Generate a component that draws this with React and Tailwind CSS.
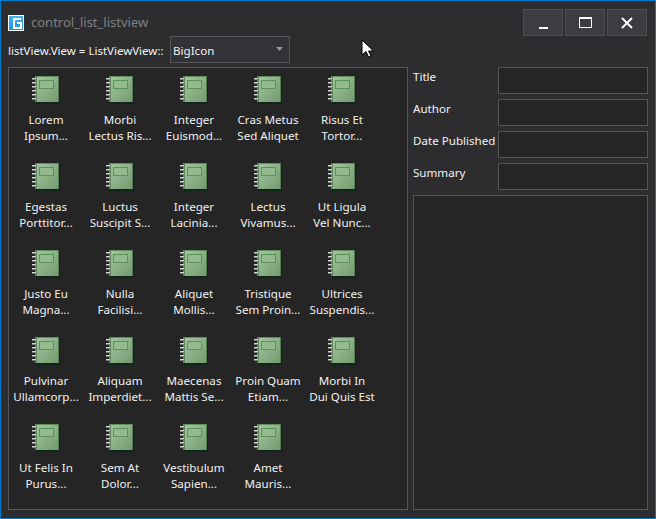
const rows = [
  [["Lorem", "Ipsum..."], ["Morbi", "Lectus Ris..."], ["Integer", "Euismod..."], ["Cras Metus", "Sed Aliquet"], ["Risus Et", "Tortor..."]],
  [["Egestas", "Porttitor..."], ["Luctus", "Suscipit S..."], ["Integer", "Lacinia..."], ["Lectus", "Vivamus..."], ["Ut Ligula", "Vel Nunc..."]],
  [["Justo Eu", "Magna..."], ["Nulla", "Facilisi..."], ["Aliquet", "Mollis..."], ["Tristique", "Sem Proin..."], ["Ultrices", "Suspendis..."]],
  [["Pulvinar", "Ullamcorp..."], ["Aliquam", "Imperdiet..."], ["Maecenas", "Mattis Se..."], ["Proin Quam", "Etiam..."], ["Morbi In", "Dui Quis Est"]],
  [["Ut Felis In", "Purus..."], ["Sem At", "Dolor..."], ["Vestibulum", "Sapien..."], ["Amet", "Mauris..."]],
];

function Notebook() {
  const spiral = [3, 7, 11, 15, 19, 23];
  return (
    <svg width="28" height="28" viewBox="0 0 28 28" className="block">
      <defs>
        <linearGradient id="nb" x1="0" y1="0" x2="1" y2="1">
          <stop offset="0" stopColor="#a4c8a0" />
          <stop offset="1" stopColor="#74996f" />
        </linearGradient>
      </defs>
      <rect x="4" y="1" width="24" height="27" fill="#10261a" />
      <rect x="3" y="0" width="24" height="26" fill="url(#nb)" />
      <rect x="3" y="0" width="24" height="1" fill="#5f8f5e" />
      <rect x="26" y="0" width="1" height="26" fill="#4f7f50" />
      <rect x="3" y="0" width="2" height="26" fill="#5f865c" />
      <rect x="7.5" y="4.5" width="14" height="8" fill="#94bb8f" stroke="#5c915a" />
      {spiral.map((y) => (
        <g key={y}>
          <rect x="0" y={y - 1} width="4" height="1" fill="#d6d6d6" />
          <rect x="0" y={y} width="4" height="1" fill="#77807a" />
        </g>
      ))}
    </svg>
  );
}

function Item({ lines }) {
  return (
    <div className="flex h-[87px] w-[74px] flex-col items-center pt-[8px]">
      <Notebook />
      <div className="mt-[8px] text-center text-[11.6px] leading-[16px] whitespace-nowrap text-[#f1f1f1]">
        <div>{lines[0]}</div>
        <div>{lines[1]}</div>
      </div>
    </div>
  );
}

function Field({ label }) {
  return (
    <div className="flex h-[27px] items-start">
      <div className="w-[85px] pt-[2px] text-[11.6px] leading-[16px] whitespace-nowrap text-[#f1f1f1]">{label}</div>
      <div className="h-[27px] w-[150px] border border-[#55555a] bg-[#252526]" />
    </div>
  );
}

function WinButton({ children }) {
  return (
    <div className="flex h-[27px] w-[40px] items-center justify-center border border-[#4d4d52] bg-[#3c3c42]">
      {children}
    </div>
  );
}

export default function App() {
  return (
    <div
      className="relative flex h-[519px] w-[656px] flex-col overflow-hidden border border-[#007acc] bg-[#2d2d30]"
      style={{ fontFamily: '"Noto Sans", sans-serif' }}
    >
      <div className="flex h-[35px] items-start">
        <div className="mt-[14px] ml-[7px] flex h-[16px] w-[16px] items-center justify-center border border-white bg-gradient-to-b from-[#3db4f5] to-[#2a8fd8]">
          <svg width="12" height="12" viewBox="0 0 12 12">
            <path d="M11 2H4v9h7V6H7" fill="none" stroke="#fff" strokeWidth="2" />
          </svg>
        </div>
        <div className="mt-[12px] ml-[7px] text-[13px] leading-[19px] text-[#808080]">control_list_listview</div>
        <div className="mt-[8px] mr-[8px] ml-auto flex gap-[2px]">
          <WinButton>
            <div className="mt-[11px] h-[2px] w-[9px] bg-white" />
          </WinButton>
          <WinButton>
            <div className="h-[11px] w-[13px] border border-t-2 border-white" />
          </WinButton>
          <WinButton>
            <svg width="12" height="12" viewBox="0 0 12 12">
              <path d="M1 1l10 10M11 1L1 11" stroke="#fff" strokeWidth="2" fill="none" />
            </svg>
          </WinButton>
        </div>
      </div>

      <div className="ml-[7px] flex h-[27px] items-center">
        <div className="w-[162px] pt-[3px] text-[11.5px] leading-[16px] whitespace-nowrap text-[#f1f1f1]">listView.View = ListViewView::</div>
        <div className="flex h-[27px] w-[120px] items-center justify-between border border-[#55555a] bg-[#333337] pr-[6px] pl-[2px] text-[11.6px] text-[#f1f1f1]">
          <span className="pt-[3px]">BigIcon</span>
          <svg width="7" height="4" viewBox="0 0 7 4" className="mb-[2px]">
            <path d="M0 0h7L3.5 4z" fill="#99999a" />
          </svg>
        </div>
      </div>

      <div className="mt-[4px] ml-[7px] flex gap-[5px]">
        <div className="h-[443px] w-[400px] border border-[#55555a] bg-[#252526]">
          {rows.map((r, i) => (
            <div key={i} className="flex">
              {r.map((l, j) => (
                <Item key={j} lines={l} />
              ))}
            </div>
          ))}
        </div>
        <div className="flex w-[235px] flex-col gap-[5px]">
          <Field label="Title" />
          <Field label="Author" />
          <Field label="Date Published" />
          <Field label="Summary" />
          <div className="h-[315px] border border-[#55555a] bg-[#252526]" />
        </div>
      </div>

      <svg width="13" height="20" viewBox="0 0 13 20" className="absolute top-[38px] left-[360px]">
        <path d="M1 1v15l4-3.5L7.5 18l2.5-1-2.5-5H12.5z" fill="#fff" stroke="#000" strokeWidth="1" />
      </svg>
    </div>
  );
}
